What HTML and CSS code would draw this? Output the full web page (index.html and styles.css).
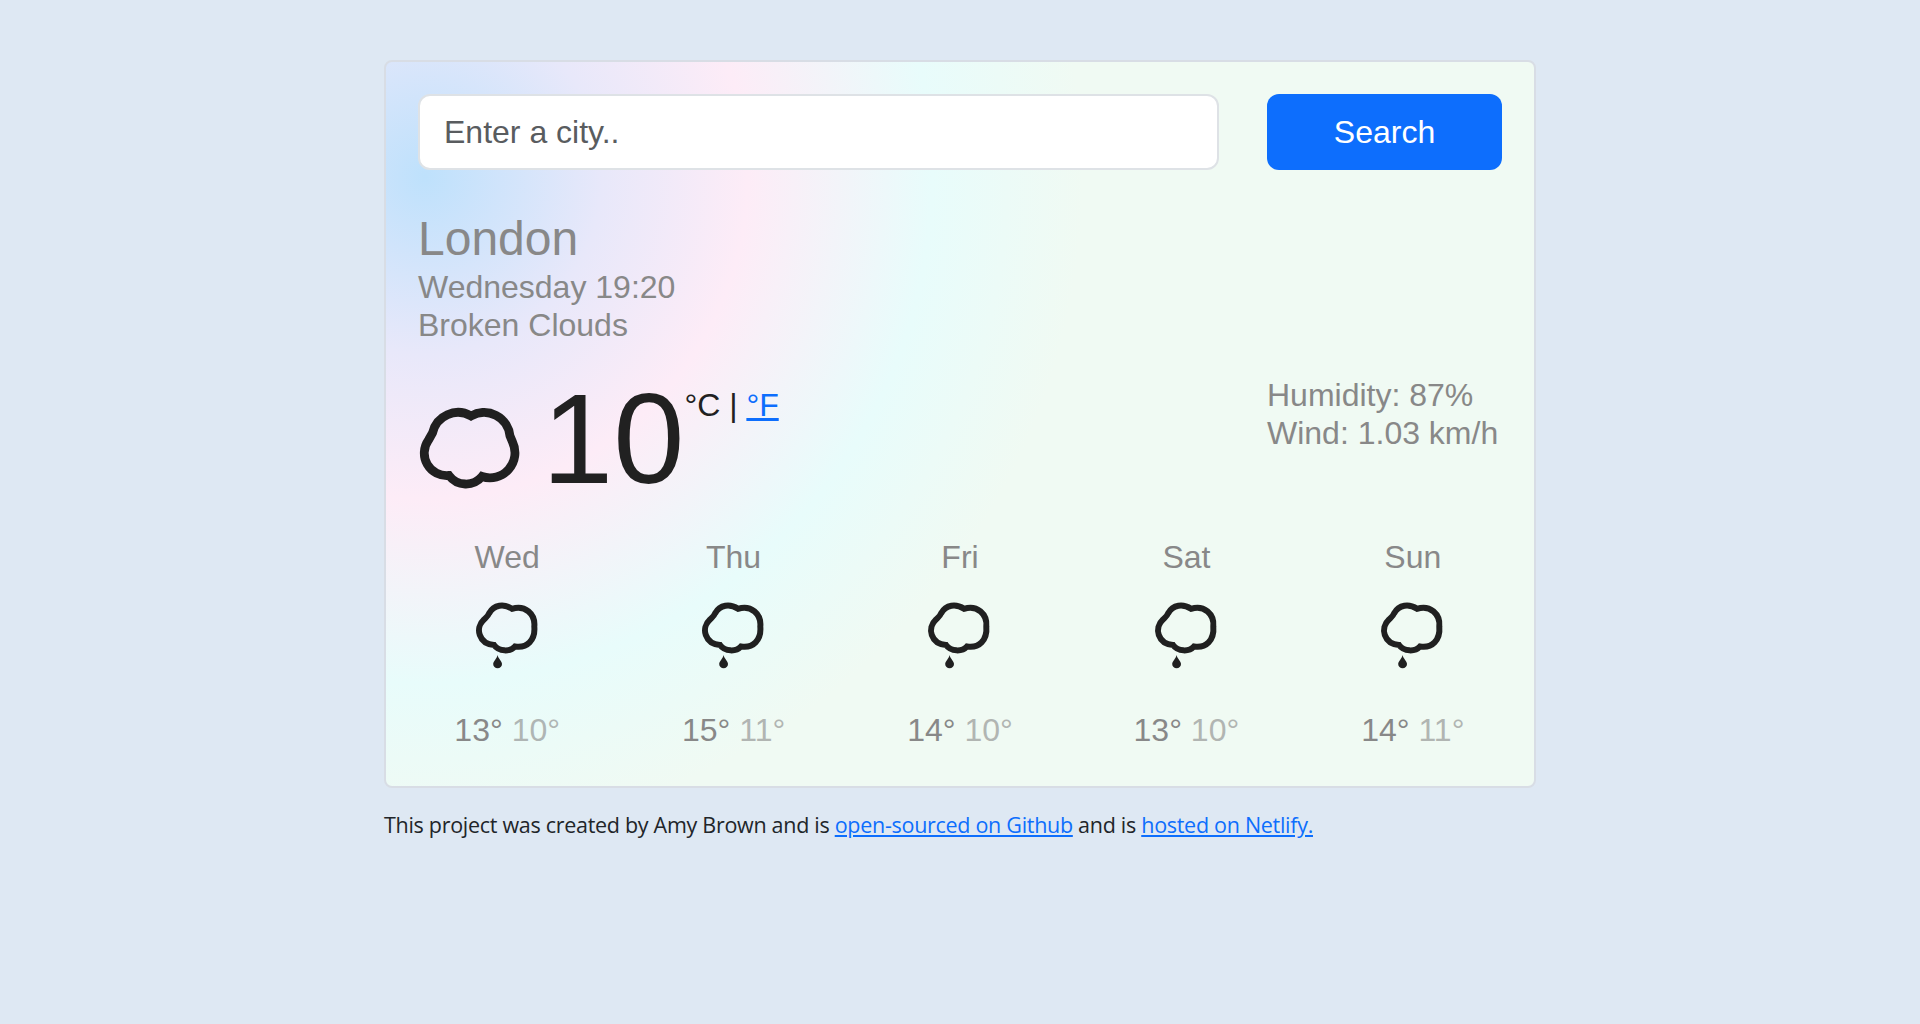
FILE: index.html
```html
<!DOCTYPE html>
<html lang="en">
<head>
<meta charset="utf-8">
<title>Weather</title>
<link rel="stylesheet" href="styles.css">
</head>
<body>
<svg class="defs" aria-hidden="true">
<symbol id="rain" viewBox="0 0 90 90"><path class="cloud small" d="M51 18.800C43 13.500 33 14.500 28 23.500C27 26 25 27.500 23 29.500C13.500 38 18 54 33 55C38 61.800 49 62 54 56.500C66 58.500 74.500 50 73.300 36.500C74.500 24 64 14.500 51 18.800Z"/><path class="drop" d="M36.500 65C37.500 69 41 71.200 41 73.900A4.400 4.400 0 0 1 32.200 73.900C32.200 71.200 35.800 69 36.500 65Z"/></symbol>
</svg>
<div class="container">
<main class="card">
<form class="search"><input type="text" placeholder="Enter a city.."><button type="button">Search</button></form>
<section class="overview"><h1>London</h1><p>Wednesday 19:20</p><p>Broken Clouds</p></section>
<section class="current">
<div class="temperature"><svg class="now" viewBox="0 0 120 105"><path class="cloud" d="M61 21A26 26 0 0 0 22.500 38L18.500 45A22.500 22.500 0 0 0 39 80.500A21 21 0 0 0 72 81.500A25 25 0 0 0 102.500 47L100 41A26 26 0 0 0 61 21Z"/></svg><strong>10</strong><span class="units">°C | <a href="#">°F</a></span></div>
<div class="details"><p>Humidity: 87%</p><p>Wind: 1.03 km/h</p></div>
</section>
<section class="forecast">
<div class="day"><p>Wed</p><svg><use href="#rain"/></svg><p>13° <span>10°</span></p></div>
<div class="day"><p>Thu</p><svg><use href="#rain"/></svg><p>15° <span>11°</span></p></div>
<div class="day"><p>Fri</p><svg><use href="#rain"/></svg><p>14° <span>10°</span></p></div>
<div class="day"><p>Sat</p><svg><use href="#rain"/></svg><p>13° <span>10°</span></p></div>
<div class="day"><p>Sun</p><svg><use href="#rain"/></svg><p>14° <span>11°</span></p></div>
</section>
</main>
<footer>This project was created by Amy Brown and is <a href="#">open-sourced on Github</a> and is <a href="#">hosted on Netlify.</a></footer>
</div>
</body>
</html>
```
FILE: styles.css
```css
* { box-sizing: border-box; }
body { margin: 0; background: #dee8f3; color: #212529; }
p, h1 { margin: 0; font-weight: 400; }
a { color: #0d6efd; }
.defs { display: none; }
.container { width: 1152px; margin: 0 auto; padding-top: 60px; }
.card {
  height: 728px; padding: 32px; border: 2px solid #d8dde5; border-radius: 8px;
  font: 32px/38.4px "Liberation Sans", Arial, sans-serif; color: #888;
  background: radial-gradient(circle at 3.4% 15.8%, #bee1fc 0%, #e8e8fa 14%, #fdecf7 25.5%, #e8fcfb 40%, #f0faf3 52%);
}
.search { display: grid; grid-template-columns: 801px 235px; gap: 48px; height: 76px; }
.search input {
  height: 76px; padding: 0 24px; border: 2px solid #dee2e6; border-radius: 12px;
  background: #fff; font: inherit; color: #212529;
}
.search input::placeholder { color: #595c5f; opacity: 1; }
.search button { border: 0; border-radius: 12px; background: #0d6efd; color: #fff; font: inherit; }
.overview { margin-top: 40px; }
.overview h1 { font-size: 48px; line-height: 58px; }
.current { display: flex; justify-content: space-between; margin-top: 31px; height: 162px; }
.temperature { display: flex; align-items: flex-start; color: #212121; }
.now { width: 120px; height: 105px; margin: 19px 0 0 -8px; }
.temperature strong { margin: -1px 0 0 12px; font-size: 128px; line-height: 128px; font-weight: 400; }
.units { margin-top: 10px; }
.details { width: 235px; white-space: nowrap; }
.cloud { fill: none; stroke: #202020; stroke-width: 8.8; }
.cloud.small { stroke-width: 6; }
.drop { fill: #202020; }
.forecast { display: grid; grid-template-columns: repeat(5, 1fr); margin: 0 -24px; text-align: center; }
.day { display: flex; flex-direction: column; align-items: center; }
.day svg { width: 90px; height: 90px; margin: 14px 3px 31px 0; }
.day span { opacity: .6; }
footer {
  margin-top: 20px; font: 21.5px/34px "Open Sans", "Noto Sans", sans-serif;
  letter-spacing: -.29px; white-space: nowrap;
}
```
